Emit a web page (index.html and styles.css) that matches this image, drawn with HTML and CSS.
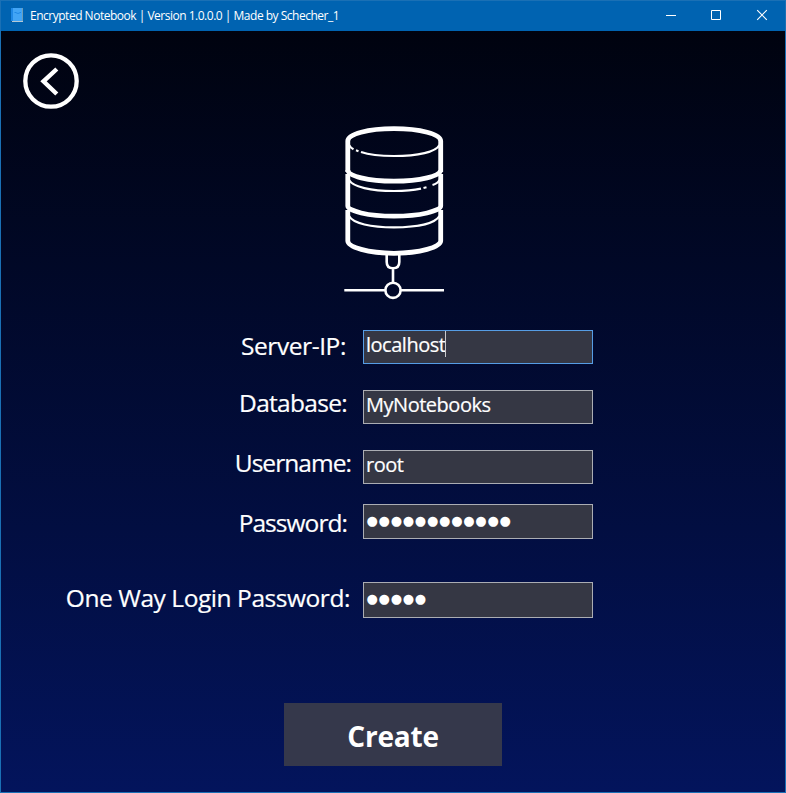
FILE: index.html
```html
<!DOCTYPE html>
<html lang="en">
<head>
<meta charset="utf-8">
<title>Encrypted Notebook</title>
<link rel="stylesheet" href="styles.css">
</head>
<body>
<div class="window">
  <header class="titlebar">
    <svg class="app-icon" width="12" height="14" viewBox="0 0 12 14">
      <path d="M0 0H12V14H0Z" fill="#42a5f5"/>
      <path d="M0 0H2V13H0Z" fill="#1e88e5"/>
      <path d="M3.5 4.5H5L6 5.3H8L9 4.500H10" fill="none" stroke="#1e88e5"/>
      <path d="M11.500 0V13" stroke="#6d9db8"/>
      <path d="M1 13.500H12" stroke="#b4c9d6"/>
      <path d="M0 13.500H1" stroke="#164f86"/>
    </svg>
    <span class="title">Encrypted Notebook | Version 1.0.0.0 | Made by Schecher_1</span>
    <div class="controls">
      <svg width="46" height="30" viewBox="0 0 46 30"><path d="M17 14.500H27" stroke="#fff"/></svg>
      <svg width="46" height="30" viewBox="0 0 46 30"><path d="M16.500 9.500H25.500V18.500H16.500Z" fill="none" stroke="#fff"/></svg>
      <svg width="46" height="30" viewBox="0 0 46 30"><path d="M16.200 9.200L25.800 18.800M25.800 9.200L16.200 18.800" stroke="#fff" stroke-width="1.100"/></svg>
    </div>
  </header>
  <main class="content">
    <svg class="back" width="58" height="58" viewBox="0 0 58 58" fill="none" stroke="#fff">
      <circle cx="29" cy="29" r="25.700" stroke-width="4.300"/>
      <path d="M34.800 17L21.500 29.300L34.800 42" stroke-width="4.400"/>
    </svg>
    <svg class="database" width="120" height="190" viewBox="0 0 120 190" fill="none" stroke="#fff">
      <g stroke-width="4.800">
        <path d="M12.800 57V26C12.800 19 33 13.700 59 13.700S105.700 19 105.700 26V57"/>
        <path d="M12.800 55C13 61 33 66.200 59 66.200S105.500 61 105.700 55"/>
        <path d="M12.800 59V91C13 96 33 101.200 59 101.200S105.500 96 105.700 91V59"/>
        <path d="M12.800 95V126C13 132 33 138.300 59 138.300S105.500 132 105.700 126V95"/>
      </g>
      <g stroke-width="2.200">
        <path d="M14 30C15 32 16.500 33.300 18.500 34.300M21 35.300L23.500 36.200M26 37C34 39.800 46 41 59 41C83 41 101 37 104.500 30"/>
        <path d="M14 65C18 72 36 76 59 76C70 76 79 75.200 86 73.700M88.500 73L91.500 72.300M97.500 70C101 69 103.500 67 104.500 65"/>
        <path d="M14 101C18 108.500 36 112.300 59 112.300S100 108.500 104.500 101"/>
      </g>
      <g stroke-width="2.600">
        <path d="M51.700 140V147Q51.700 153.300 58 153.300Q64.300 153.300 64.300 147V140M58 153.300V167"/>
        <circle cx="58" cy="175.300" r="7.600"/>
        <path d="M9.300 175.300H50.400M65.600 175.300H109"/>
      </g>
    </svg>
    <form class="form">
      <div class="row row-server"><label class="label">Server-IP:</label><div class="field focused"><span class="value">localhost</span><i class="caret"></i></div></div>
      <div class="row row-database"><label class="label">Database:</label><div class="field"><span class="value">MyNotebooks</span></div></div>
      <div class="row row-user"><label class="label">Username:</label><div class="field"><span class="value">root</span></div></div>
      <div class="row row-password"><label class="label">Password:</label><div class="field"><span class="dots">●●●●●●●●●●●●</span></div></div>
      <div class="row row-login"><label class="label">One Way Login Password:</label><div class="field"><span class="dots">●●●●●</span></div></div>
    </form>
    <button class="create" type="button">Create</button>
  </main>
</div>
</body>
</html>
```
FILE: styles.css
```css
* { box-sizing: border-box; }
body { margin: 0; font-family: "Open Sans", "Noto Sans", sans-serif; color: #fff; }
.window {
  width: 786px; height: 793px; overflow: hidden;
  border: 1px solid #1a70b5;
  background: linear-gradient(#00020c, #03145c);
  display: flex; flex-direction: column;
}
.titlebar { height: 30px; flex: none; background: #0063b1; display: flex; align-items: flex-start; }
.app-icon { margin: 7px 0 0 10px; }
.title { margin-left: 7px; font-size: 12px; line-height: 30px; letter-spacing: -0.49px; white-space: nowrap; }
.controls { margin-left: auto; display: flex; margin-right: -2px; }
.content { flex: 1; display: flex; flex-direction: column; align-items: flex-start; }
svg { display: block; flex: none; }
.back { margin: 21px 0 0 21px; }
.database { margin: 5px 0 0 334px; }
.form { margin-top: 25px; width: 592px; }
.row { display: flex; justify-content: flex-end; align-items: flex-start; }
.label { font-size: 24.5px; line-height: 35px; white-space: nowrap; -webkit-text-stroke: 0.2px #fff; }
.field {
  flex: none; width: 230px; height: 34px; padding-left: 2px;
  border: 1px solid #abadb3; background: #353744; display: flex;
}
.focused { border-color: #569de5; }
.value { font-size: 20px; line-height: 28px; letter-spacing: -0.48px; white-space: nowrap; -webkit-text-stroke: 0.2px #fff; }
.caret { width: 1px; height: 26px; background: #cacbcf; }
.dots { font: 13px/32px "DejaVu Sans", sans-serif; letter-spacing: 0.75px; margin-left: 0.5px; }
.row-server, .row-database { height: 60px; }
.row-user { height: 54px; }
.row-password { height: 78px; }
.row-password .field { height: 35px; }
.row-login .field { height: 36px; }
.row-server .label { margin: -2px 17px 0 0; letter-spacing: -0.4px; }
.row-database .label { margin: -5px 16px 0 0; letter-spacing: -0.7px; }
.row-user .label { margin: -5px 12px 0 0; letter-spacing: -0.95px; }
.row-password .label { margin: 1px 16px 0 0; letter-spacing: -0.95px; }
.row-login .label { margin: -2px 13px 0 0; letter-spacing: -0.44px; }
.create {
  margin: 85px 0 0 283px; width: 218px; height: 63px; padding: 3px 0 0; border: 0;
  background: #35384b; color: #fff; font: bold 28px "Open Sans", sans-serif; letter-spacing: -0.2px;
}
```
